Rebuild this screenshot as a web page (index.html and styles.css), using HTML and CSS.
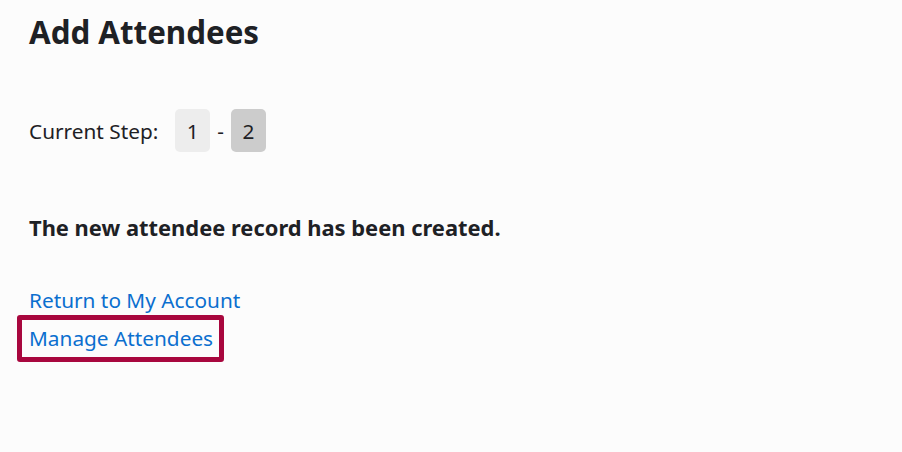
FILE: index.html
```html
<!DOCTYPE html>
<html>
<head>
<meta charset="utf-8">
<link rel="stylesheet" href="styles.css">
</head>
<body>
<main class="page">
  <h1 class="title">Add Attendees</h1>
  <div class="steps">
    <span class="steps-label">Current Step:</span>
    <span class="step">1</span>
    <span class="sep">-</span>
    <span class="step step-active">2</span>
  </div>
  <p class="message">The new attendee record has been created.</p>
  <ul class="links">
    <li><a href="#">Return to My Account</a></li>
    <li class="highlight"><a href="#">Manage Attendees</a></li>
  </ul>
</main>
</body>
</html>
```
FILE: styles.css
```css
html, body {
  margin: 0;
  padding: 0;
  background: #fcfcfc;
}
body {
  font-family: "Noto Sans", "Open Sans", sans-serif;
  color: #1e2125;
  width: 902px;
  height: 452px;
  overflow: hidden;
}
.page {
  padding: 12px 29px;
}
.title {
  margin: 0;
  font-size: 31.3px;
  font-weight: 700;
  line-height: 40px;
}
.steps {
  display: flex;
  align-items: center;
  margin-top: 57px;
  font-size: 20.8px;
}
.steps-label {
  margin-right: 17px;
}
.step {
  display: inline-flex;
  align-items: center;
  justify-content: center;
  width: 35px;
  height: 43px;
  border-radius: 5px;
  background: #ededed;
}
.step-active {
  background: #cccccc;
}
.sep {
  margin: 0 7px;
}
.message {
  margin: 61px 0 0;
  font-size: 21.9px;
  font-weight: 700;
  line-height: 30px;
}
.links {
  list-style: none;
  margin: 38px 0 0;
  padding: 0;
  font-size: 20.8px;
  line-height: 38px;
}
.links a {
  color: #0b6fcf;
  text-decoration: none;
}
.highlight {
  margin: -4px 0 0 -12px;
  padding: 0 6px 0 7px;
  border: 5px solid #a8073e;
  border-radius: 3px;
  width: fit-content;
  line-height: 37px;
}
```
